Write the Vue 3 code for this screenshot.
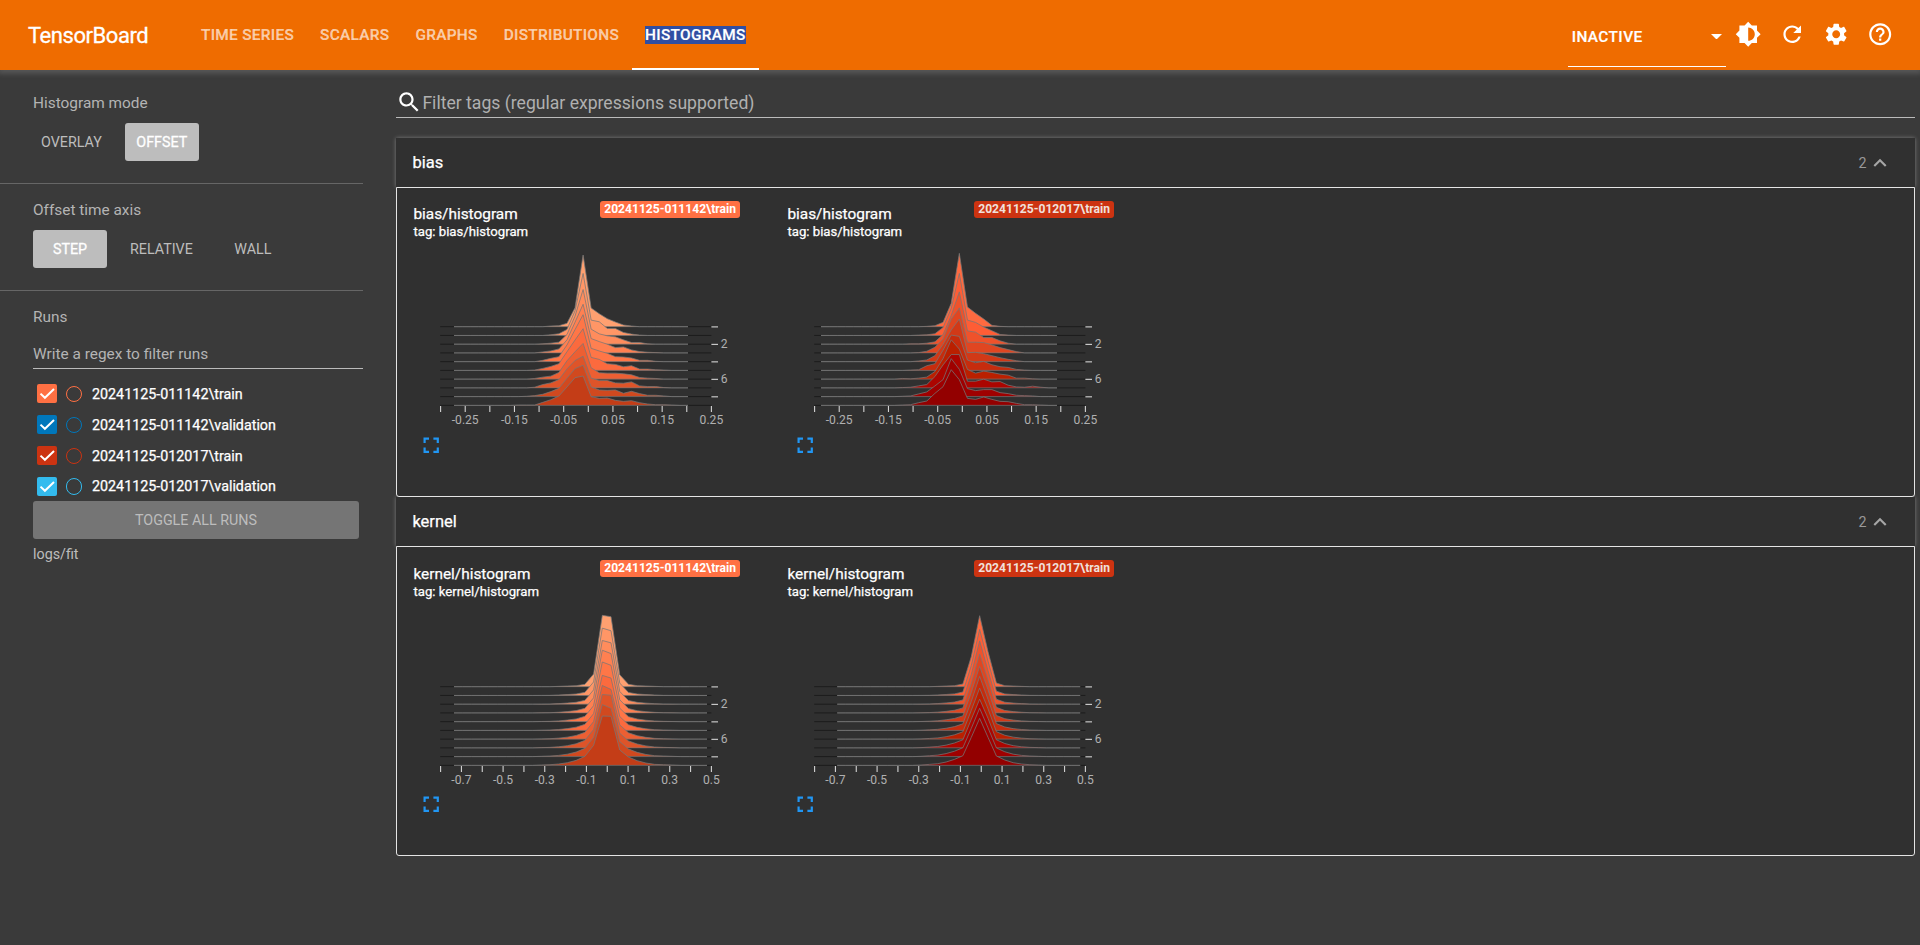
<script setup>
const tabs = ['TIME SERIES', 'SCALARS', 'GRAPHS', 'DISTRIBUTIONS', 'HISTOGRAMS']

const runs = [
  { name: '20241125-011142\\train', tone: 'orange' },
  { name: '20241125-011142\\validation', tone: 'blue' },
  { name: '20241125-012017\\train', tone: 'red' },
  { name: '20241125-012017\\validation', tone: 'cyan' },
]

const orangeRamp = ['#ffa070', '#ff9666', '#ff8c5c', '#ff8051', '#ff7647', '#fb6a3e', '#ec5f33', '#de5429', '#d1491f', '#c43d17']
const redRamp = ['#ff6a40', '#ff5d35', '#ef522b', '#e04621', '#d13917', '#c62c0d', '#ba2000', '#ab0500', '#9f0000', '#930000']

// Plot frame inside each chart, in px
const X0 = 27.6
const X1 = 298.4
const BASE = 81.7
const STEP = 8.74
const BINS = 30

// Every row: first bin index, then bin heights in thirds of a px
const biasA = [
  [12, 2, 3, 10, 57, 215, 56, 39, 24, 14, 5, 2],
  [12, 2, 5, 18, 74, 186, 46, 41, 21, 21, 9, 4, 1],
  [11, 1, 3, 6, 29, 84, 164, 45, 31, 25, 22, 13, 5, 5, 1],
  [11, 3, 6, 12, 39, 92, 146, 43, 34, 26, 16, 18, 9, 4, 2, 1],
  [11, 4, 10, 15, 50, 96, 141, 40, 32, 25, 15, 14, 11, 4, 4, 1],
  [10, 1, 6, 12, 20, 56, 91, 125, 39, 33, 20, 18, 11, 14, 4, 4, 2, 1],
  [10, 2, 6, 9, 20, 55, 82, 107, 34, 19, 18, 18, 16, 13, 5, 3, 2],
  [10, 2, 10, 15, 25, 57, 82, 95, 29, 22, 22, 15, 14, 18, 6, 4, 4, 1],
  [9, 1, 3, 7, 15, 25, 55, 84, 94, 29, 20, 19, 20, 10, 16, 9, 4, 4, 2],
  [8, 1, 1, 1, 9, 17, 28, 55, 83, 88, 26, 21, 22, 15, 12, 14, 8, 4, 2, 2, 1],
]
const biasB = [
  [13, 1, 3, 13, 70, 220, 59, 40, 23, 4, 1],
  [12, 1, 2, 5, 24, 81, 186, 46, 39, 25, 14, 3, 1],
  [11, 1, 1, 3, 7, 29, 86, 157, 40, 36, 20, 20, 10, 3],
  [12, 1, 5, 17, 42, 101, 135, 32, 32, 31, 24, 16, 10, 4],
  [12, 2, 5, 18, 52, 95, 128, 27, 28, 24, 18, 12, 7, 3],
  [11, 1, 2, 14, 20, 61, 106, 102, 31, 23, 27, 17, 11, 9, 3, 1],
  [10, 2, 1, 3, 6, 23, 62, 118, 90, 29, 18, 24, 20, 15, 12, 3, 3, 1],
  [10, 1, 2, 6, 10, 34, 69, 100, 100, 20, 20, 26, 18, 19, 8, 3, 2, 5, 2],
  [10, 1, 2, 8, 14, 32, 51, 114, 82, 24, 18, 21, 21, 12, 9, 4, 3, 2],
  [10, 1, 2, 8, 13, 36, 56, 107, 77, 21, 18, 25, 18, 12, 11, 6, 2, 2, 1],
]

// Bell shapes that widen evenly from the first step to the last
function widening(start, first, last, overrides) {
  return Array.from({ length: 10 }, (_, i) => {
    const t = i / 9
    const row = first.map((v, k) => v + (last[k] - v) * t)
    for (const [k, values] of Object.entries(overrides)) row[k - start] = values[i]
    return [start, ...row]
  })
}
const kernelA = widening(
  10,
  [0, 0, 1, 2, 3, 7, 38, 0, 0, 36, 7, 3, 2, 1, 0, 0],
  [1, 2, 4, 8, 15, 27, 60, 0, 0, 46, 25, 14, 7, 3, 2, 1],
  {
    17: [214, 202, 191, 188, 179, 165, 161, 160, 156, 148],
    18: [210, 194, 184, 178, 169, 157, 149, 158, 145, 147],
  },
)
const kernelB = widening(
  10,
  [0, 0, 1, 2, 3, 8, 90, 0, 105, 11, 3, 2, 1, 0, 0],
  [1, 3, 5, 10, 18, 29, 84, 0, 84, 28, 16, 8, 4, 2, 1],
  { 17: [213, 198, 190, 177, 166, 162, 153, 146, 145, 141] },
)

function ridges(rows, from, to, ramp) {
  const dx = (to - from) / (BINS - 1)
  return rows.map(([start, ...heights], i) => {
    const y = BASE + STEP * i
    const pts = Array.from({ length: BINS }, (_, k) => {
      const h = heights[k - start] || 0
      return `${(from + dx * k).toFixed(2)},${(y - h / 3).toFixed(2)}`
    })
    return { d: `M${pts.join('L')}Z`, fill: ramp[i] }
  })
}

const rowYs = Array.from({ length: 10 }, (_, i) => BASE + STEP * i)

function axis(labels, count) {
  const gap = (X1 - X0) / (count - 1)
  return Array.from({ length: count }, (_, i) => ({
    x: X0 + gap * i,
    label: i % 2 ? labels[(i - 1) / 2] : '',
  }))
}
const biasAxis = axis(['-0.25', '-0.15', '-0.05', '0.05', '0.15', '0.25'], 12)
const kernelAxis = axis(['-0.7', '-0.5', '-0.3', '-0.1', '0.1', '0.3', '0.5'], 14)

const sections = [
  {
    name: 'bias',
    cards: [
      { run: runs[0], ticks: biasAxis, ridges: ridges(biasA, 41, 275, orangeRamp) },
      { run: runs[2], ticks: biasAxis, ridges: ridges(biasB, 34, 270, redRamp) },
    ],
  },
  {
    name: 'kernel',
    cards: [
      { run: runs[0], ticks: kernelAxis, ridges: ridges(kernelA, 41, 294, orangeRamp) },
      { run: runs[2], ticks: kernelAxis, ridges: ridges(kernelB, 50.2, 293.2, redRamp) },
    ],
  },
]

const actions = [
  'M20 15.31L23.31 12 20 8.69V4h-4.69L12 .69 8.69 4H4v4.69L.69 12 4 15.31V20h4.69L12 23.31 15.31 20H20v-4.69zM12 18V6c3.31 0 6 2.69 6 6s-2.69 6-6 6z',
  'M17.65 6.35C16.2 4.9 14.21 4 12 4c-4.42 0-7.99 3.58-7.99 8s3.57 8 7.99 8c3.73 0 6.84-2.55 7.73-6h-2.08c-.82 2.33-3.04 4-5.65 4-3.31 0-6-2.69-6-6s2.69-6 6-6c1.66 0 3.14.69 4.22 1.78L13 11h7V4l-2.35 2.35z',
  'M19.14 12.94c.04-.3.06-.61.06-.94 0-.32-.02-.64-.07-.94l2.03-1.58c.18-.14.23-.41.12-.61l-1.92-3.32c-.12-.22-.37-.29-.59-.22l-2.39.96c-.5-.38-1.03-.7-1.62-.94l-.36-2.54c-.04-.24-.24-.41-.48-.41h-3.84c-.24 0-.43.17-.47.41l-.36 2.54c-.59.24-1.13.57-1.62.94l-2.39-.96c-.22-.08-.47 0-.59.22L2.74 8.87c-.12.21-.08.47.12.61l2.03 1.58c-.05.3-.09.63-.09.94s.02.64.07.94l-2.03 1.58c-.18.14-.23.41-.12.61l1.92 3.32c.12.22.37.29.59.22l2.39-.96c.5.38 1.03.7 1.62.94l.36 2.54c.05.24.24.41.48.41h3.84c.24 0 .44-.17.47-.41l.36-2.54c.59-.24 1.13-.56 1.62-.94l2.39.96c.22.08.47 0 .59-.22l1.92-3.32c.12-.22.07-.47-.12-.61l-2.01-1.58zM12 15.6c-1.98 0-3.6-1.62-3.6-3.6s1.62-3.6 3.6-3.6 3.6 1.62 3.6 3.6-1.62 3.6-3.6 3.6z',
  'M11 18h2v-2h-2v2zm1-16C6.48 2 2 6.48 2 12s4.48 10 10 10 10-4.48 10-10S17.52 2 12 2zm0 18c-4.41 0-8-3.59-8-8s3.59-8 8-8 8 3.59 8 8-3.59 8-8 8zm0-14c-2.21 0-4 1.79-4 4h2c0-1.1.9-2 2-2s2 .9 2 2c0 2-3 1.75-3 5h2c0-2.25 3-2.5 3-5 0-2.21-1.79-4-4-4z',
]
</script>

<template>
  <div class="app">
    <header class="topbar">
      <div class="brand">TensorBoard</div>
      <nav class="tabs">
        <div v-for="t in tabs" :key="t" class="tab" :class="{ active: t === 'HISTOGRAMS' }">
          <span>{{ t }}</span>
        </div>
      </nav>
      <div class="select">
        <span>INACTIVE</span>
        <svg class="caret" viewBox="0 0 10 5"><path d="M0 0h10L5 5z" /></svg>
      </div>
      <div class="actions">
        <svg v-for="(d, i) in actions" :key="i" viewBox="0 0 24 24"><path :d="d" /></svg>
      </div>
    </header>

    <div class="body">
      <aside class="sidebar">
        <section class="group">
          <h3>Histogram mode</h3>
          <div class="buttons">
            <div class="btn">OVERLAY</div>
            <div class="btn on">OFFSET</div>
          </div>
        </section>
        <section class="group">
          <h3>Offset time axis</h3>
          <div class="buttons">
            <div class="btn on">STEP</div>
            <div class="btn">RELATIVE</div>
            <div class="btn">WALL</div>
          </div>
        </section>
        <section class="runs">
          <h3>Runs</h3>
          <div class="regex">Write a regex to filter runs</div>
          <div v-for="r in runs" :key="r.name" class="run" :class="r.tone">
            <span class="check">
              <svg viewBox="0 0 20 19"><path d="M3.5 9.6l4.4 4.2L17 5" /></svg>
            </span>
            <span class="ring"></span>
            <span class="run-name">{{ r.name }}</span>
          </div>
          <div class="toggle">TOGGLE ALL RUNS</div>
          <div class="logdir">logs/fit</div>
        </section>
      </aside>

      <main class="main">
        <div class="search">
          <svg viewBox="0 0 24 24">
            <path d="M15.5 14h-.79l-.28-.27C15.41 12.59 16 11.11 16 9.5 16 5.91 13.09 3 9.5 3S3 5.91 3 9.5 5.91 16 9.5 16c1.61 0 3.09-.59 4.23-1.57l.27.28v.79l5 4.99L20.49 19l-4.99-5zm-6 0C7.01 14 5 11.99 5 9.5S7.01 5 9.5 5 14 7.01 14 9.5 11.99 14 9.5 14z" />
          </svg>
          <span>Filter tags (regular expressions supported)</span>
        </div>

        <section v-for="s in sections" :key="s.name" class="pane" :class="s.name">
          <div class="pane-head">
            <span class="pane-name">{{ s.name }}</span>
            <span class="count">2</span>
            <svg class="chevron" viewBox="0 0 24 24"><path d="M12 8l-6 6 1.41 1.41L12 10.83l4.59 4.58L18 14z" /></svg>
          </div>
          <div class="pane-body">
            <article v-for="c in s.cards" :key="c.run.name" class="card">
              <div class="card-head">
                <div class="titles">
                  <div class="title">{{ s.name }}/histogram</div>
                  <div class="tag">tag: {{ s.name }}/histogram</div>
                </div>
                <div class="badge" :class="c.run.tone">{{ c.run.name }}</div>
              </div>
              <svg class="chart" width="327" height="187" viewBox="0 0 327 187">
                <line v-for="y in rowYs" :key="y" class="grid" :x1="X0 - 0.4" :x2="X1" :y1="y" :y2="y" />
                <path v-for="r in c.ridges" :key="r.fill" class="ridge" :d="r.d" :fill="r.fill" />
                <g v-for="t in c.ticks" :key="t.x">
                  <line class="tick" :x1="t.x" :x2="t.x" :y1="161" :y2="167" />
                  <text v-if="t.label" class="lab" text-anchor="middle" :x="t.x" y="179">{{ t.label }}</text>
                </g>
                <g v-for="i in [0, 2, 4, 6, 8]" :key="i">
                  <line class="tick" :x1="X1" :x2="X1 + 6.6" :y1="rowYs[i] + 0.2" :y2="rowYs[i] + 0.2" />
                  <text v-if="i === 2 || i === 6" class="lab" :x="X1 + 9.4" :y="rowYs[i] + 4">{{ i }}</text>
                </g>
              </svg>
              <svg class="expand" viewBox="0 0 24 24">
                <path d="M7 14H5v5h5v-2H7v-3zm-2-4h2V7h3V5H5v5zm12 7h-3v2h5v-5h-2v3zM14 5v2h3v3h2V5h-5z" />
              </svg>
            </article>
          </div>
        </section>
      </main>
    </div>
  </div>
</template>

<style>
body {
  background: #3a3a3a;
}
</style>

<style scoped>
.app {
  height: 945px;
  overflow: hidden;
  background: #3a3a3a;
  color: #fff;
  font-family: Roboto, 'Liberation Sans', sans-serif;
  display: flex;
  flex-direction: column;
}
.topbar {
  position: relative;
  flex: none;
  height: 70px;
  background: #ef6c00;
  display: flex;
  align-items: center;
  box-shadow: 0 2px 5px 2px rgba(255, 255, 255, 0.14);
}
.brand {
  width: 160px;
  padding-left: 28px;
  font-size: 22px;
  letter-spacing: -0.45px;
  -webkit-text-stroke: 0.3px currentColor;
}
.tabs {
  display: flex;
  height: 70px;
}
.tab {
  box-sizing: border-box;
  height: 70px;
  padding: 0 13px;
  display: flex;
  align-items: center;
  font-size: 15.4px;
  font-weight: 500;
  letter-spacing: 0.3px;
  color: rgba(255, 255, 255, 0.65);
  -webkit-text-stroke: 0.2px currentColor;
}
.tab.active {
  color: #fff;
  border-bottom: 2px solid #fff;
  padding-top: 2px;
}
.tab.active span {
  background: #304ea2;
}
.select {
  box-sizing: border-box;
  margin-left: auto;
  width: 158px;
  height: 67px;
  padding: 7px 4px 0;
  align-self: flex-start;
  border-bottom: 1px solid #fff;
  display: flex;
  align-items: center;
  justify-content: space-between;
  font-size: 15.4px;
  font-weight: 500;
  letter-spacing: 0.4px;
  -webkit-text-stroke: 0.2px currentColor;
}
.caret {
  width: 11px;
  height: 5.5px;
  fill: #fff;
}
.actions {
  display: flex;
  gap: 17.6px;
  margin: 0 27px 2px 9px;
}
.actions svg {
  width: 26.4px;
  height: 26.4px;
  fill: #fff;
}
.body {
  flex: 1;
  display: flex;
}
.sidebar {
  width: 396px;
  flex: none;
}
h3 {
  margin: 0;
  font-size: 15.4px;
  line-height: 20px;
  font-weight: 400;
  color: #b4b4b4;
}
.group {
  box-sizing: border-box;
  width: 363px;
  padding: 16px 0 22px 33px;
  border-bottom: 1px solid #666;
}
.group:first-child {
  padding-top: 23px;
}
.buttons {
  display: flex;
  gap: 15px;
  margin-top: 10px;
}
.btn {
  box-sizing: border-box;
  min-width: 74px;
  height: 38px;
  padding: 0 8px;
  border-radius: 3px;
  font-size: 14.3px;
  line-height: 38px;
  text-align: center;
  color: #bdbdbd;
}
.btn.on {
  background: #bdbdbd;
  color: #fff;
  -webkit-text-stroke: 0.3px currentColor;
}
.runs {
  padding: 16px 0 0 33px;
}
.regex {
  width: 330px;
  height: 30px;
  margin: 11px 0 9px;
  border-bottom: 1px solid #bbb;
  font-size: 15.4px;
  line-height: 32px;
  color: #b4b4b4;
}
.run {
  display: flex;
  align-items: center;
  height: 31px;
  padding-left: 4px;
}
.run.cyan {
  height: 30px;
}
.check {
  width: 20px;
  height: 19px;
  border-radius: 2px;
  background: var(--tone);
}
.check svg {
  display: block;
  width: 20px;
  height: 19px;
  fill: none;
  stroke: #fff;
  stroke-width: 2;
}
.ring {
  box-sizing: border-box;
  width: 16.5px;
  height: 16.5px;
  margin: 1px 10px 0 8.5px;
  border: 1.6px solid var(--tone);
  border-radius: 50%;
}
.run-name {
  font-size: 14.3px;
  line-height: 20px;
  -webkit-text-stroke: 0.25px currentColor;
}
.orange {
  --tone: #ff7043;
}
.blue {
  --tone: #0077bb;
}
.red {
  --tone: #cc3311;
}
.cyan {
  --tone: #33bbee;
}
.toggle {
  width: 326px;
  height: 38px;
  border-radius: 3px;
  background: #757575;
  color: #bdbdbd;
  font-size: 14.3px;
  line-height: 38px;
  text-align: center;
}
.logdir {
  margin-top: 5px;
  font-size: 14.3px;
  line-height: 20px;
  color: #bdbdbd;
}
.main {
  width: 1519px;
}
.search {
  box-sizing: border-box;
  height: 48px;
  padding-top: 18px;
  margin-bottom: 20px;
  border-bottom: 1px solid #bbb;
  display: flex;
  align-items: center;
  font-size: 17.6px;
  color: #b0b0b0;
}
.search svg {
  width: 26.4px;
  height: 26.4px;
  fill: #fff;
}
.pane-head {
  display: flex;
  align-items: center;
  height: 49px;
  padding: 0 22.5px 0 16.4px;
  background: #303030;
  box-shadow: 0 0 4px rgba(255, 255, 255, 0.35);
}
.pane-name {
  margin-right: auto;
  font-size: 16.5px;
  -webkit-text-stroke: 0.25px currentColor;
}
.count {
  font-size: 14.3px;
  color: #999;
}
.chevron {
  width: 26px;
  height: 26px;
  fill: #a6a6a6;
}
.pane-body {
  position: relative;
  box-sizing: border-box;
  height: 310px;
  padding-left: 16px;
  border: 1px solid #e4e4e4;
  border-radius: 0 0 3px 3px;
  background: #303030;
  display: grid;
  grid-template-columns: 374px 374px;
}
.card {
  width: 327px;
}
.card-head {
  display: flex;
  justify-content: space-between;
  height: 57px;
}
.titles {
  padding: 17px 0 0 0.4px;
  -webkit-text-stroke: 0.25px currentColor;
}
.title {
  font-size: 15.4px;
  line-height: 18px;
}
.tag {
  font-size: 13.2px;
  line-height: 18px;
}
.badge {
  box-sizing: border-box;
  height: 17px;
  margin-top: 13px;
  padding: 0 4px;
  border-radius: 3px;
  background: var(--tone);
  font-size: 12.1px;
  line-height: 16px;
  font-weight: 700;
}
.badge.red {
  color: #f0e0dc;
}
.chart {
  display: block;
}
.kernel .titles {
  padding-top: 18px;
}
.kernel .chart {
  margin: 1px 0 -1px;
}
.grid {
  stroke: #1c1c1c;
  stroke-width: 1;
}
.ridge {
  stroke: #777;
  stroke-opacity: 0.75;
  stroke-width: 1;
}
.tick {
  stroke: #d4d4d4;
  stroke-width: 1.1;
}
.lab {
  font-size: 12.1px;
  fill: #b0b0b0;
}
.expand {
  display: block;
  width: 26.4px;
  height: 26.4px;
  margin-left: 4.5px;
  fill: #2196f3;
}
</style>
